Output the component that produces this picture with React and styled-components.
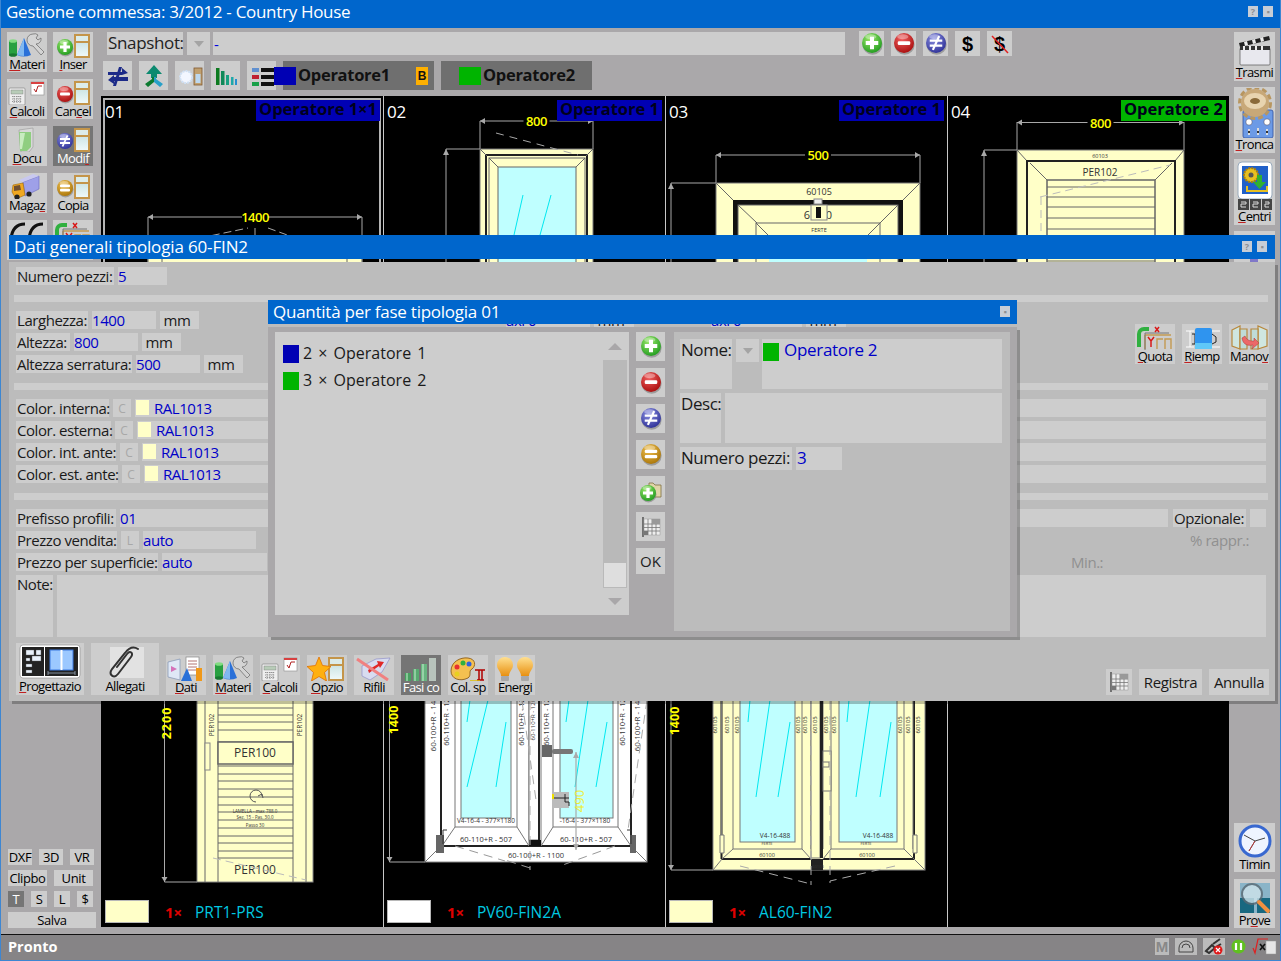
import React from 'react';
import styled, { createGlobalStyle } from 'styled-components';

const GlobalStyle = createGlobalStyle`
  html, body {
    margin: 0;
    padding: 0;
    background: #aaa8aa;
  }

  * {
    box-sizing: border-box;
  }
`;

const FONT = '"Open Sans", "Noto Sans", "Liberation Sans", sans-serif';
const SILVER = '#cdcdcd';
const CREAM = '#ffffc8';
const GLASS = '#bfffff';

const Root = styled.div`
  position: relative;
  display: flex;
  flex-direction: column;
  width: 1281px;
  height: 961px;
  overflow: hidden;
  background: #aaa8aa;
  color: #000;
  font-family: ${FONT};

  &::after {
    content: '';
    position: absolute;
    inset: 0;
    border: 1px solid #3d86d2;
    border-top: 0;
    pointer-events: none;
  }
`;

const TitleBar = styled.div`
  display: flex;
  align-items: center;
  justify-content: space-between;
  flex: none;
  height: ${({ $h }) => $h || 24}px;
  padding: ${({ $pad }) => $pad || '0 5px'};
  background: #0066cc;
  color: #fff;
  font-size: 17px;
  letter-spacing: ${({ $ls }) => $ls}px;
  white-space: nowrap;
`;

const TitleButtons = styled.div`
  display: flex;
  gap: 5px;
`;

const TitleButton = styled.span`
  display: flex;
  align-items: center;
  justify-content: center;
  width: 10px;
  height: 11px;
  background: #c6cdd6;
  color: #8b8f94;
  font-size: 9px;
  font-weight: 700;
  line-height: 1;
  letter-spacing: 0;
`;

const Middle = styled.div`
  display: flex;
  flex: none;
  height: 906px;
  padding: 4px 6px 6px 7px;
`;

const LeftColumn = styled.div`
  display: flex;
  flex: none;
  flex-direction: column;
  justify-content: space-between;
  width: 94px;
`;

const ToolGrid = styled.div`
  display: grid;
  grid-template-columns: 40px 40px;
  gap: 7px 6px;
`;

const SmallTools = styled.div`
  display: flex;
  flex-direction: column;
  gap: 5px;
  margin-left: 1px;
`;

const SmallRow = styled.div`
  display: flex;
  gap: 7px;
`;

const SmallButton = styled.button`
  display: flex;
  align-items: center;
  justify-content: center;
  width: ${({ $w }) => $w}px;
  height: 16px;
  padding: 0;
  border: 0;
  background: ${({ $dark }) => ($dark ? '#757575' : SILVER)};
  color: ${({ $dark }) => ($dark ? '#fff' : '#000')};
  font-family: ${FONT};
  font-size: 13px;
  letter-spacing: -0.4px;
`;

const Center = styled.div`
  display: flex;
  flex: none;
  flex-direction: column;
  gap: 6px;
  width: 1128px;
`;

const SnapshotRow = styled.div`
  display: flex;
  align-items: center;
  height: 23px;
  padding-left: 6px;
`;

const SnapshotLabel = styled.span`
  display: flex;
  align-items: center;
  width: 76px;
  height: 23px;
  padding: 0 0 2px 1px;
  background: ${SILVER};
  color: #222;
  font-size: 17px;
  letter-spacing: -0.35px;
`;

const DropDown = styled.span`
  display: flex;
  align-items: center;
  justify-content: center;
  width: 23px;
  height: 23px;
  margin: 0 ${({ $after }) => $after}px 0 ${({ $before }) => $before}px;
  background: ${SILVER};

  &::after {
    content: '';
    border-top: 6px solid #a4a4a4;
    border-right: 5px solid transparent;
    border-left: 5px solid transparent;
  }
`;

const SnapshotField = styled.span`
  display: flex;
  align-items: center;
  width: 632px;
  height: 23px;
  padding-left: 1px;
  background: ${SILVER};
  color: #0000e0;
  font-size: 15px;
`;

const RoundTools = styled.div`
  display: flex;
  gap: 7px;
  margin: -1px 0 -1px 14px;
`;

const IconButton = styled.button`
  display: flex;
  align-items: center;
  justify-content: center;
  flex: none;
  width: ${({ $s }) => $s}px;
  height: ${({ $h, $s }) => $h || $s}px;
  padding: 0;
  border: 0;
  background: ${SILVER};
  color: #222;
  font-family: ${FONT};
  font-size: 15px;

  svg {
    display: block;
  }
`;

const DollarMark = styled.span`
  position: relative;
  color: #000;
  font-family: "Liberation Sans", sans-serif;
  font-size: 20px;
  font-weight: 700;
  line-height: 1;

  svg {
    position: absolute;
    left: -3px;
    top: 0;
  }
`;

const SecondRow = styled.div`
  display: flex;
  align-items: center;
  height: 29px;
  padding-left: 2px;
`;

const SmallIconRow = styled.div`
  display: flex;
  gap: 7px;
`;

const OperatorTab = styled.div`
  position: relative;
  display: flex;
  align-items: center;
  flex: none;
  width: 151px;
  height: 29px;
  margin-left: ${({ $ml }) => $ml}px;
  padding: 0 0 2px ${({ $pl }) => $pl}px;
  background: #6f6f6f;
  color: #111;
  font-size: 16.5px;
  font-weight: 700;
  letter-spacing: -0.3px;
`;

const TabSwatch = styled.span`
  flex: none;
  width: 22px;
  height: 18px;
  margin: 2px 2px 0 0;
  background: ${({ $c }) => $c};
`;

const OverlapSwatch = styled.span`
  position: absolute;
  left: -9px;
  top: 6px;
  width: 22px;
  height: 18px;
  background: ${({ $c }) => $c};
`;

const TabBadge = styled.span`
  position: absolute;
  right: 6px;
  top: 6px;
  display: flex;
  align-items: center;
  justify-content: center;
  width: 12px;
  height: 18px;
  background: #ffb000;
  font-family: "Liberation Sans", sans-serif;
  font-size: 12px;
`;

const Canvas = styled.div`
  display: grid;
  grid-template-columns: repeat(4, 282px);
  grid-template-rows: 415px 416px;
  flex: none;
  height: 831px;
  background: #000;
`;

const DrawCell = styled.div`
  position: relative;
  overflow: hidden;
  background: #000;
  box-shadow: ${({ $selected, $first }) =>
    $selected
      ? 'inset 0 0 0 2px #000, inset 0 0 0 4px #b4b4b4'
      : $first
        ? 'none'
        : 'inset 1px 0 0 #c8c8c8'};

  svg {
    display: block;
    width: 100%;
    height: 100%;
  }
`;

const CellNumber = styled.span`
  position: absolute;
  left: 4px;
  top: 4px;
  color: #fff;
  font-size: 17px;
  letter-spacing: -0.3px;
`;

const Banner = styled.span`
  position: absolute;
  right: 3px;
  top: 4px;
  height: 21px;
  padding: 0 3px;
  background: ${({ $c }) => $c};
  color: #00001c;
  font-size: 16.5px;
  font-weight: 700;
  line-height: 18px;
  white-space: nowrap;
`;

const Caption = styled.div`
  position: absolute;
  left: 4px;
  bottom: 4px;
  display: flex;
  align-items: center;
  height: 23px;
`;

const CaptionSwatch = styled.span`
  width: 44px;
  height: 23px;
  margin-right: 16px;
  border: 1px solid #b8b8b8;
  background: ${({ $c }) => $c};
`;

const CaptionCount = styled.span`
  width: 30px;
  color: #e00000;
  font-size: 15px;
  font-weight: 700;
`;

const CaptionName = styled.span`
  color: #00c8e0;
  font-size: 15.5px;
`;

const RightColumn = styled.div`
  display: flex;
  flex: none;
  flex-direction: column;
  justify-content: space-between;
  width: 41px;
  margin-left: 5px;
`;

const ToolStack = styled.div`
  display: flex;
  flex-direction: column;
  gap: ${({ $gap }) => $gap || 7}px;
`;

const ToolButton = styled.button`
  display: flex;
  flex: none;
  flex-direction: column;
  align-items: center;
  justify-content: space-between;
  width: ${({ $w }) => $w || 40}px;
  height: ${({ $h }) => $h || 40}px;
  padding: 1px 0 0;
  border: 0;
  background: ${({ $dark }) => ($dark ? '#757575' : SILVER)};
  color: ${({ $dark }) => ($dark ? '#fff' : '#000')};
  font-family: ${FONT};

  svg {
    display: block;
    flex: none;
  }
`;

const ToolLabel = styled.span`
  display: block;
  height: 15px;
  font-size: 13px;
  line-height: 12px;
  letter-spacing: -0.65px;
  white-space: nowrap;
`;

const AccessKey = styled.span`
  text-decoration: underline;
  text-decoration-color: #c02020;
`;

const StatusBar = styled.div`
  display: flex;
  align-items: center;
  justify-content: space-between;
  flex: none;
  height: 27px;
  padding: 0 4px 3px 8px;
  border-top: 1px solid #111;
  background: #868486;
  color: #fff;
  font-size: 14.5px;
  font-weight: 700;
`;

const StatusIcons = styled.div`
  display: flex;
  align-items: center;
  gap: 6px;
`;

const StatusCell = styled.span`
  display: flex;
  align-items: center;
  justify-content: center;
  width: ${({ $w }) => $w}px;
  height: 17px;
  background: ${({ $plain }) => ($plain ? 'transparent' : '#bbb')};
  color: #888;
  font-family: "Liberation Sans", sans-serif;
  font-size: 15px;
`;

const Window = styled.section`
  position: absolute;
  left: ${({ $x }) => $x}px;
  top: ${({ $y }) => $y}px;
  display: flex;
  flex-direction: column;
  width: ${({ $w }) => $w}px;
`;

const WindowBody = styled.div`
  display: flex;
  flex-direction: ${({ $row }) => ($row ? 'row' : 'column')};
  gap: ${({ $row }) => ($row ? '7px' : '0')};
  height: ${({ $h }) => $h}px;
  margin-top: 3px;
  padding: ${({ $pad }) => $pad};
  background: ${({ $bg }) => $bg};
  box-shadow: 3px 3px 0 rgba(0, 0, 0, 0.25);
`;

const Row = styled.div`
  display: flex;
  flex: none;
  gap: 4px;
  height: ${({ $h }) => $h || 18}px;
`;

const Stack = styled.div`
  display: flex;
  flex: ${({ $grow }) => ($grow ? 1 : 'none')};
  flex-direction: column;
  gap: 4px;
  min-width: 0;
`;

const Block = styled.div`
  display: flex;
  flex: none;
`;

const SideTools = styled.div`
  display: flex;
  flex: none;
  gap: 7px;
  margin: 13px -3px 0 0;
`;

const Strip = styled.div`
  flex: none;
  height: 7px;
  margin: 10px -2px 9px;
  background: ${SILVER};
`;

const Label = styled.span`
  display: block;
  flex: none;
  width: ${({ $w }) => $w}px;
  height: ${({ $tall }) => ($tall ? '100%' : '18px')};
  margin-left: ${({ $ml }) => $ml || 0}px;
  padding-left: 1px;
  background: ${({ $bare }) => ($bare ? 'transparent' : SILVER)};
  color: ${({ $bare }) => ($bare ? '#909090' : '#1a1a1a')};
  font-size: 15px;
  line-height: 19px;
  letter-spacing: -0.45px;
  white-space: nowrap;
`;

const Field = styled.span`
  display: flex;
  align-items: flex-start;
  flex: ${({ $w }) => ($w ? 'none' : 1)};
  width: ${({ $w }) => ($w ? `${$w}px` : 'auto')};
  margin-left: ${({ $ml }) => $ml || 0}px;
  padding-left: 0;
  background: ${SILVER};
  color: ${({ $plain }) => ($plain ? '#1a1a1a' : '#0000c8')};
  font-size: 15px;
  line-height: 19px;
  letter-spacing: -0.45px;
  white-space: nowrap;
`;

const KeyField = styled.span`
  display: flex;
  align-items: center;
  justify-content: center;
  flex: none;
  width: 18px;
  background: ${SILVER};
  color: #a8a8a8;
  font-size: 12px;
`;

const ColorSwatch = styled.span`
  flex: none;
  width: 13px;
  height: 15px;
  margin: 1px 5px 0 1px;
  background: ${CREAM};
`;

const Toolbar = styled.div`
  display: flex;
  align-items: flex-end;
  flex: none;
  gap: 7px;
  margin: 6px -3px 0 0;
`;

const TextButton = styled.button`
  flex: none;
  width: ${({ $w }) => $w}px;
  height: 26px;
  padding: 0;
  border: 0;
  background: ${SILVER};
  color: #1a1a1a;
  font-family: ${FONT};
  font-size: 15px;
  letter-spacing: -0.4px;
`;

const Spacer = styled.span`
  flex: 1;
`;

const ListBox = styled.div`
  display: flex;
  flex: none;
  width: 354px;
  height: 283px;
  background: ${SILVER};
`;

const ListItems = styled.div`
  display: flex;
  flex: 1;
  flex-direction: column;
  gap: 9px;
  padding: 13px 0 0 8px;
`;

const ListItem = styled.div`
  display: flex;
  align-items: center;
  gap: 4px;
  height: 18px;
  color: #1a1a1a;
  font-size: 16px;
  line-height: 16px;
  word-spacing: 2px;
`;

const ListSwatch = styled.span`
  width: 16px;
  height: 18px;
  background: ${({ $c }) => $c};
`;

const ListText = styled.span`
  margin-top: -2px;
`;

const ScrollBar = styled.div`
  display: flex;
  flex: none;
  flex-direction: column;
  width: 24px;
  margin-right: 2px;
`;

const ScrollArrow = styled.span`
  display: flex;
  align-items: center;
  justify-content: center;
  height: ${({ $h }) => $h}px;

  &::after {
    content: '';
    border-right: 7px solid transparent;
    border-left: 7px solid transparent;
    ${({ $down }) => ($down ? 'border-top' : 'border-bottom')}: 7px solid #a9a7a9;
  }
`;

const ScrollTrack = styled.div`
  display: flex;
  flex: 1;
  align-items: flex-end;
  padding: 1px;
  background: #b9b9b9;
`;

const ScrollThumb = styled.span`
  width: 100%;
  height: 24px;
  background: #dedede;
`;

const DialogTools = styled.div`
  display: flex;
  flex: none;
  flex-direction: column;
  gap: 7px;
`;

const Panel = styled.div`
  display: flex;
  flex: none;
  flex-direction: column;
  gap: 4px;
  width: 336px;
  height: 299px;
  margin-left: 2px;
  padding: 7px 8px 0 6px;
  background: #bcbcbc;
`;

const PanelRow = styled.div`
  display: flex;
  gap: 4px;
  height: ${({ $h }) => $h}px;
`;

const PanelLabel = styled.span`
  flex: none;
  width: ${({ $w }) => $w}px;
  padding-left: 1px;
  background: ${SILVER};
  color: #1a1a1a;
  font-size: 17px;
  line-height: 22px;
  letter-spacing: -0.45px;
  white-space: nowrap;
`;

const PanelField = styled.span`
  display: flex;
  align-items: flex-start;
  flex: ${({ $w }) => ($w ? 'none' : 1)};
  width: ${({ $w }) => ($w ? `${$w}px` : 'auto')};
  padding: ${({ $swatch }) => ($swatch ? '4px 0 0 1px' : '0 0 0 1px')};
  background: ${SILVER};
  color: #0000c8;
  font-size: 17px;
  line-height: 22px;
  letter-spacing: -0.3px;
`;

const PanelSwatch = styled.span`
  flex: none;
  width: 16px;
  height: 18px;
  margin-right: 5px;
  background: #00b400;
`;

const PanelValue = styled.span`
  margin-top: -4px;
`;

const HiddenDefs = styled.svg`
  position: absolute;
  width: 0;
  height: 0;
`;

const Defs = () => (
  <HiddenDefs aria-hidden="true">
    <defs>
      {[
        ['green', '#9be86a', '#1e9a1e'],
        ['red', '#f06060', '#a80c0c'],
        ['blue', '#8a8ee0', '#2c2f96'],
        ['gold', '#f0c050', '#a87408'],
      ].map(([id, a, b]) => (
        <radialGradient key={id} id={`ball-${id}`} cx="40%" cy="30%" r="75%">
          <stop offset="0" stopColor={a} />
          <stop offset="1" stopColor={b} />
        </radialGradient>
      ))}
      <linearGradient id="bulb" x1="0" y1="0" x2="0" y2="1">
        <stop offset="0" stopColor="#ffe090" />
        <stop offset="1" stopColor="#e89010" />
      </linearGradient>
      <linearGradient id="glassy" x1="0" y1="0" x2="0" y2="1">
        <stop offset="0" stopColor="#cfe6e6" />
        <stop offset="1" stopColor="#eef8f8" />
      </linearGradient>
    </defs>
  </HiddenDefs>
);

const Ball = ({ cx, cy, r, color, sym }) => {
  const u = r / 8;
  return (
    <g transform={`translate(${cx} ${cy}) scale(${u})`}>
      <ellipse cx="0.5" cy="1.4" rx="8" ry="8" fill="#777" opacity="0.55" />
      <circle r="8" fill={`url(#ball-${color})`} />
      <ellipse cx="-1" cy="-5" rx="4.5" ry="2" fill="#fff" opacity="0.35" />
      {sym === 'plus' && <path d="M-1.6-5H1.6V-1.6H5V1.6H1.6V5H-1.6V1.6H-5V-1.6H-1.6Z" fill="#fff" />}
      {sym === 'minus' && <rect x="-5" y="-1.5" width="10" height="3" rx="1" fill="#fff" />}
      {sym === 'eq' && (
        <g fill="#fff">
          <rect x="-5" y="-3.4" width="10" height="2.6" rx="1" />
          <rect x="-5" y="0.8" width="10" height="2.6" rx="1" />
        </g>
      )}
      {sym === 'ne' && (
        <g fill="none" stroke="#fff" strokeWidth="1.8">
          <path d="M-5-2H5M-5 2H5M2.5-5.500L-2.500 5.500" />
        </g>
      )}
    </g>
  );
};

const Sash = () => (
  <g>
    <rect x="21" y="1" width="16" height="24" fill="#c4954a" />
    <rect x="23" y="3" width="12" height="5" fill="#dcecea" />
    <rect x="23" y="10" width="12" height="13" fill="url(#glassy)" />
  </g>
);

const Calculator = () => (
  <g>
    <rect x="2" y="8" width="16" height="17" rx="1" fill="#eee" stroke="#888" strokeWidth="0.7" />
    <rect x="4" y="10" width="12" height="4" fill="#b8ccb8" stroke="#777" strokeWidth="0.4" />
    <path d="M5 16.5h10M5 19h10M5 21.500h10M7 16v7M10 16v7M13 16v7" stroke="#8a8a8a" strokeWidth="0.9" strokeDasharray="1.200 .8" />
    <rect x="24" y="2" width="13" height="13" fill="#fff" stroke="#999" strokeWidth="0.7" />
    <rect x="24" y="2" width="13" height="2" fill="#d84040" />
    <path d="M27 9l2 3 2-6h4" fill="none" stroke="#b02020" strokeWidth="1" />
  </g>
);

const Materials = () => (
  <g>
    <rect x="2" y="8" width="8" height="14" fill="#28a040" />
    <ellipse cx="6" cy="8" rx="4" ry="1.800" fill="#80dc80" />
    <ellipse cx="6" cy="22" rx="4" ry="1.800" fill="#187830" />
    <path d="M17 5L24 22Q17 25 10 22Z" fill="#2a70d8" />
    <path d="M17 5L17 23Q13 23 10 22Z" fill="#80b8f0" />
    <path d="M26 1a5 5 0 0 1 5 1l-2 3 2 2 3-2a5 5 0 0 1-5 6l8 8-3 3-8-9a5 5 0 0 1 0-12z" fill="#d4d4d4" stroke="#666" strokeWidth="0.7" />
  </g>
);

const icons = {
  materi: <Materials />,
  inser: (
    <g>
      <Sash />
      <Ball cx={12} cy={14} r={8} color="green" sym="plus" />
    </g>
  ),
  calcoli: <Calculator />,
  cancel: (
    <g>
      <Sash />
      <Ball cx={12} cy={14} r={8} color="red" sym="minus" />
    </g>
  ),
  docu: (
    <g>
      <path d="M12 3L26 1V20L22 25H14Z" fill="#d8d8d8" stroke="#999" strokeWidth="0.6" />
      <path d="M12 5H24V20L20 24H13Z" fill="#8fce80" />
      <path d="M13 6H18L15 22H13Z" fill="#c8ecc0" />
    </g>
  ),
  modif: (
    <g>
      <Sash />
      <Ball cx={12} cy={14} r={8} color="blue" sym="ne" />
    </g>
  ),
  magaz: (
    <g>
      <path d="M16 8L32 2V15L18 22Z" fill="#9ea0e8" stroke="#6a6ac0" strokeWidth="0.6" />
      <path d="M16 8L32 2L26 0L12 6Z" fill="#c8c8f0" />
      <path d="M6 11L16 9L18 21L9 25L5 18Z" fill="#f0a820" stroke="#a06808" strokeWidth="0.6" />
      <path d="M7 12L13 11L14 16L7 17Z" fill="#705030" />
      <circle cx="10" cy="23" r="2.600" fill="#222" />
      <circle cx="22" cy="20" r="2.600" fill="#222" />
    </g>
  ),
  copia: (
    <g>
      <Sash />
      <Ball cx={12} cy={14} r={8} color="gold" sym="eq" />
    </g>
  ),
  ce: <path d="M18 3C10 3 5 8 4 18M36 3C28 3 23 8 22 18" fill="none" stroke="#111" strokeWidth="3" />,
  quota: (
    <g>
      <path d="M10 10V24M10 10H36M30 24V14h6v10M22 24V14h6" fill="none" stroke="#c49a52" strokeWidth="1.400" />
      <path d="M4 22V9a5 5 0 0 1 5-5h5" fill="none" stroke="#30b040" strokeWidth="4" />
      <path d="M10 8H34M10 8V26" fill="none" stroke="#777" strokeWidth="1" />
      <path d="M20 2l4 5M24 2l-4 5" stroke="#d81818" strokeWidth="1.500" />
      <path d="M13 12l3 4 3-4M16 16v6" fill="none" stroke="#d81818" strokeWidth="1.500" />
    </g>
  ),
  riemp: (
    <g>
      <path d="M4 6H12M4 22H12M8 6V22M30 6H38M30 22H38" stroke="#fff" strokeWidth="1" />
      <path d="M10 9h3v10h-3" fill="none" stroke="#222" strokeWidth="1" />
      <rect x="13" y="3" width="17" height="21" rx="2" fill="#2f94ef" />
      <rect x="13" y="18" width="17" height="6" fill="#60c8f8" />
      <path d="M30 9l4 3v5l-4 2" fill="none" stroke="#222" strokeWidth="1" />
    </g>
  ),
  manov: (
    <g>
      <path d="M3 5L11 1V24L3 21ZM38 5L29 1V24L38 21Z" fill="#cfe6e0" stroke="#b8883c" strokeWidth="1.200" />
      <path d="M11 4H18V24H11ZM22 4H29V24H22Z" fill="#bfdcd8" stroke="#b8883c" strokeWidth="1.200" />
      <path d="M13 13c1 7 6 8 11 7l-1 4 7-6-5-5v3c-3 0-7 0-9-5z" fill="#ec6868" stroke="#a83838" strokeWidth="0.500" />
    </g>
  ),
  dati: (
    <g>
      <path d="M2 6L14 3V24L2 21Z" fill="#dfe8f6" stroke="#8c9cb8" strokeWidth="0.800" />
      <path d="M5 10l6 3-6 3z" fill="#d040a0" opacity="0.700" />
      <rect x="20" y="1" width="13" height="18" fill="#fff" stroke="#888" strokeWidth="0.700" />
      <path d="M22 5h9M22 8h9M22 11h9M22 14h9" stroke="#a05050" strokeWidth="0.800" />
      <path d="M21 12L26 25H15Z" fill="#2a70d8" />
      <rect x="30" y="12" width="6" height="13" fill="#f09818" />
    </g>
  ),
  opzio: (
    <g>
      <Sash />
      <path d="M12 1L15.500 9.500L24 10.500L17.500 16.500L19.500 25L12 20.500L4.500 25L6.500 16.500L0 10.500L8.500 9.500Z" fill="#ffb010" stroke="#e07000" strokeWidth="0.800" />
    </g>
  ),
  rifili: (
    <g>
      <path d="M8 10L22 3L36 2L28 16L16 24L8 20Z" fill="#d8dcf0" stroke="#9090c8" strokeWidth="0.700" />
      <path d="M14 14L24 8L23 5L30 6L26 12L25 10L15 17Z" fill="#e02828" />
      <path d="M3 3L34 24" stroke="#f08080" strokeWidth="3" />
    </g>
  ),
  fasi: (
    <g>
      <rect x="4" y="17" width="6" height="8" fill="#48a060" />
      <rect x="12" y="13" width="6" height="12" fill="#58aa70" />
      <rect x="20" y="8" width="6" height="17" fill="#68b480" />
      <rect x="28" y="2" width="7" height="23" fill="#b8c4bc" />
      <path d="M6 17V25M14 13V25M22 8V25" stroke="#c8f0d0" strokeWidth="1" />
    </g>
  ),
  colsp: (
    <g>
      <path d="M3 15C3 6 12 1 20 2C28 3 28 10 24 13C20 15 24 19 20 22C12 26 3 23 3 15Z" fill="#f4c050" stroke="#805010" strokeWidth="0.800" />
      <circle cx="9" cy="11" r="2.500" fill="#e83030" />
      <circle cx="15" cy="7" r="2.500" fill="#30b040" />
      <circle cx="21" cy="8" r="2.500" fill="#3060e0" />
      <circle cx="9" cy="18" r="2.500" fill="#e8d020" />
      <path d="M27 14H37M29 24H36M31 14V24M34 14V24" fill="none" stroke="#b00000" strokeWidth="1.500" />
      <path d="M22 25H32" stroke="#e0c000" strokeWidth="1.500" />
    </g>
  ),
  energi: (
    <g>
      {[10, 30].map((x) => (
        <g key={x}>
          <path d={`M${x - 8} 9a8 8 0 0 1 16 0c0 5-4 6-4 11h-8c0-5-4-6-4-11z`} fill="url(#bulb)" />
          <rect x={x - 4} y="20" width="8" height="5" rx="1" fill="#a8a8a8" />
        </g>
      ))}
    </g>
  ),
  trasmi: (
    <g>
      <path d="M4 10L34 3L35 7L5 14Z" fill="#222" />
      <path d="M9 9l3-1 1 4-3 1zM17 7l3-1 1 4-3 1zM25 5l3-1 1 4-3 1z" fill="#eee" />
      <rect x="5" y="15" width="30" height="17" rx="1" fill="#e8e8ee" stroke="#666" strokeWidth="0.800" />
      <rect x="5" y="13" width="30" height="4" fill="#333" />
      <path d="M9 13v4M15 13v4M21 13v4M27 13v4" stroke="#eee" strokeWidth="2" />
    </g>
  ),
  tronca: (
    <g>
      <rect x="8" y="22" width="30" height="28" rx="2" fill="#6c9ae6" stroke="#3050a0" strokeWidth="0.800" />
      <circle cx="20" cy="15" r="14" fill="#c8a878" />
      <circle cx="20" cy="15" r="15.500" fill="none" stroke="#b89660" strokeWidth="3" strokeDasharray="5 3" />
      <ellipse cx="20" cy="13" rx="11" ry="8" fill="#e8d4b0" />
      <ellipse cx="20" cy="13" rx="5" ry="3" fill="#8a6a3a" />
      <circle cx="14" cy="34" r="3.200" fill="#fff" stroke="#335" strokeWidth="0.500" />
      <circle cx="32" cy="34" r="3.200" fill="#fff" stroke="#335" strokeWidth="0.500" />
      <path d="M14 41v6M23 40v7M32 41v6" stroke="#ddd" strokeWidth="2" />
      <path d="M14 43v2M23 43v2M32 43v2" stroke="#333" strokeWidth="2" />
    </g>
  ),
  centri: (
    <g>
      <rect x="3" y="2" width="34" height="37" rx="4" fill="#fff" stroke="#9ab" strokeWidth="1" />
      <rect x="7" y="6" width="26" height="28" fill="#2060c8" />
      <circle cx="16" cy="15" r="7" fill="#e8c020" stroke="#a88010" strokeWidth="2" strokeDasharray="2 1" />
      <circle cx="16" cy="15" r="2.500" fill="#555" />
      <path d="M22 15h5v7h4l-6.500 7-6.500-7h4z" fill="#30b030" />
      <path d="M12 26v5h20v-5" fill="none" stroke="#e8c020" strokeWidth="2" />
      <rect x="3" y="39" width="11" height="11" fill="#444" />
      <rect x="15" y="39" width="11" height="11" fill="#444" />
      <rect x="27" y="39" width="10" height="11" fill="#444" />
      <path d="M6 42h5v2h-5v3h5M18 42h5v2h-5v3h5M30 42h4v2h-4v3h4" fill="none" stroke="#ddd" strokeWidth="1" />
    </g>
  ),
  timin: (
    <g>
      <circle cx="20" cy="17" r="15" fill="#eef4ff" stroke="#3868d0" strokeWidth="3" />
      <path d="M20 17L9 11M20 17L30 14M20 17L14 27" stroke="#444" strokeWidth="1" />
      <path d="M20 17L14 27" stroke="#d03030" strokeWidth="0.800" />
    </g>
  ),
  prove: (
    <g>
      <rect x="5" y="3" width="30" height="30" fill="#8ab4c8" />
      <rect x="5" y="18" width="14" height="15" fill="#186880" />
      <rect x="22" y="18" width="13" height="15" fill="#186880" />
      <circle cx="17" cy="14" r="10" fill="#cfe4ec" opacity="0.800" stroke="#5a6a74" strokeWidth="2" />
      <path d="M24 22l9 9" stroke="#f09040" strokeWidth="4" strokeLinecap="round" />
    </g>
  ),
  spare: <rect x="15" y="24" width="8" height="6" fill="#8078c8" />,
  progettazione: (
    <g>
      <rect x="1" y="1" width="60" height="33" rx="3" fill="#fff" stroke="#888" strokeWidth="0.600" />
      <rect x="3" y="3" width="22" height="29" fill="#222" />
      <rect x="26" y="3" width="33" height="29" fill="#222" />
      <path d="M7 6h8v5H7zM17 6h5v5h-5zM7 14h4v3H7zM13 12h9v5H13zM7 20h6v3H7zM7 26h6v3H7z" fill="#e8f0fa" stroke="#555" strokeWidth="0.400" />
      <rect x="31" y="6" width="23" height="20" fill="#9cc8ff" stroke="#3a78e0" strokeWidth="1" />
      <path d="M42.500 6V26" stroke="#fff" strokeWidth="2" />
      <path d="M29 29H56M29 27v4M56 27v4" stroke="#9ab" strokeWidth="0.800" />
    </g>
  ),
  allegati: (
    <g>
      <rect x="16" y="3" width="34" height="31" fill="#e2e2e2" />
      <path d="M44 5C38 1 34 5 31 9L18 25C14 31 20 35 24 30L37 13C40 9 36 6 33 10L23 23" fill="none" stroke="#333" strokeWidth="2" strokeLinecap="round" />
    </g>
  ),
};

const Glyph = ({ name, w = 40, h = 26 }) => (
  <svg width={w} height={h} viewBox={`0 0 ${w} ${h}`}>
    {icons[name]}
  </svg>
);

const Tool = ({ label, name, dark, w, h, ih = 25, iw = 40, keyAt }) => {
  const text =
    keyAt === undefined ? (
      label
    ) : (
      <>
        {label.slice(0, keyAt)}
        <AccessKey>{label[keyAt]}</AccessKey>
        {label.slice(keyAt + 1)}
      </>
    );

  return (
    <ToolButton $dark={dark} $w={w} $h={h}>
      <Glyph name={name} w={iw} h={ih} />
      <ToolLabel>{text}</ToolLabel>
    </ToolButton>
  );
};

const RoundGlyph = ({ s = 24, color, sym }) => (
  <svg width={s} height={s} viewBox="0 0 24 24">
    <Ball cx={12} cy={11} r={10} color={color} sym={sym} />
  </svg>
);

const TableGlyph = () => (
  <svg width="22" height="22" viewBox="0 0 22 22">
    <path d="M3 1V21" stroke="#333" strokeWidth="1.200" />
    <rect x="4" y="3" width="16" height="16" fill="#eee" stroke="#999" strokeWidth="0.500" />
    <path d="M4 8H20M4 11.500H20M4 15H20M8 3V19M12 3V19M16 3V19" stroke="#777" strokeWidth="0.800" />
    <rect x="4" y="15" width="4" height="4" fill="#777" />
    <rect x="12" y="3" width="8" height="5" fill="#999" />
  </svg>
);

const SmallIcon = ({ kind }) => (
  <svg width="26" height="26" viewBox="0 0 26 26">
    {kind === 'swap' && (
      <g fill="#1c2a88">
        <path d="M3 9H17V5L23 10L17 12H3Z" />
        <path d="M23 14H9V12L3 17L9 21V18H23Z" />
        <path d="M14 4L17 4L11 23L8 23Z" />
      </g>
    )}
    {kind === 'merge' && (
      <g>
        <path d="M13 2L21 11H16V15H10V11H5Z" fill="#0c8a70" />
        <path d="M11 14H13V19L7 24L4 21L11 16Z" fill="#0c7a30" />
        <path d="M13 14H15V16L22 21L19 24L13 19Z" fill="#28a0c8" />
      </g>
    )}
    {kind === 'snow' && (
      <g>
        <circle cx="9" cy="14" r="6" fill="#f2f6ff" stroke="#cfe0f4" strokeDasharray="2 1" strokeWidth="2" />
        <rect x="17" y="5" width="8" height="17" fill="#c0a070" stroke="#805830" strokeWidth="0.800" />
        <rect x="18.500" y="11" width="5" height="9" fill="#bcd8f0" />
      </g>
    )}
    {kind === 'bars' && (
      <g>
        <rect x="3" y="5" width="3.500" height="17" fill="#0c7a20" />
        <rect x="8" y="8" width="3.500" height="14" fill="#108858" />
        <rect x="13" y="12" width="3" height="10" fill="#18a080" />
        <rect x="18" y="14" width="2.500" height="8" fill="#20a8a8" />
        <rect x="22" y="16" width="2" height="6" fill="#2890d0" />
      </g>
    )}
    {kind === 'list' && (
      <g>
        <rect x="3" y="5" width="7" height="4" fill="#6090d0" />
        <rect x="3" y="12" width="7" height="4" fill="#c02030" />
        <rect x="3" y="19" width="7" height="4" fill="#18a048" />
        <rect x="12" y="5" width="13" height="4" fill="#111" />
        <rect x="12" y="12" width="13" height="4" fill="#111" />
        <rect x="12" y="19" width="13" height="4" fill="#111" />
      </g>
    )}
  </svg>
);

const GRAY = '#a8a8a8';

const DimH = ({ x1, x2, y, text }) => {
  const mid = (x1 + x2) / 2;
  return (
    <g>
      <path d={`M${x1} ${y}H${x2}`} stroke={GRAY} />
      <path d={`M${x1} ${y}l5-3v6zM${x2} ${y}l-5-3v6z`} fill={GRAY} />
      <rect x={mid - 13} y={y - 7} width="26" height="14" fill="#000" />
      <text x={mid} y={y + 5} textAnchor="middle" fill="#ffff00" fontSize="13" fontWeight="600" fontFamily={FONT} letterSpacing="-0.5">
        {text}
      </text>
    </g>
  );
};

const Tiny = ({ x, y, size = 7, rotate, children, fill = '#333' }) => (
  <text
    x={rotate ? 0 : x}
    y={rotate ? 0 : y}
    transform={rotate ? `translate(${x} ${y}) rotate(-90)` : undefined}
    textAnchor="middle"
    fontSize={size}
    fill={fill}
    fontFamily={FONT}
  >
    {children}
  </text>
);

const LINE = '#666';

const Drawing = ({ x, y, h, children }) => (
  <svg viewBox={`${x} ${y} 282 ${h}`} preserveAspectRatio="none">
    {children}
  </svg>
);

const CellOne = () => (
  <Drawing x={101} y={96} h={415}>
    <DimH x1={148} x2={362} y={217} text="1400" />
    <path d="M148 217V262M362 217V262" stroke={GRAY} />
    <path d="M200 238L248 228M268 228L290 236M255 228V238" stroke={GRAY} strokeDasharray="8 4" />
    <rect x="148" y="258" width="214" height="200" fill={CREAM} stroke={LINE} />
    <path d="M162 258V458M347 258V458" stroke={LINE} />
  </Drawing>
);

const CellTwo = () => (
  <Drawing x={383} y={96} h={415}>
    <DimH x1={480} x2={593} y={121} text="800" />
    <path d="M480 121V149M593 121V149" stroke={GRAY} />
    <path d="M446 400V149H480" fill="none" stroke={GRAY} />
    <path d="M446 149l-3 6h6z" fill={GRAY} />
    <rect x="480" y="149" width="113" height="300" fill={CREAM} stroke="#777" />
    <path d="M486 300V155H587V300" fill="none" stroke="#222" strokeWidth="2" />
    <rect x="489" y="158" width="96" height="250" fill={CREAM} stroke={LINE} />
    <rect x="498" y="167" width="78" height="240" fill={GLASS} stroke={LINE} />
    <path d="M480 149L487 156M593 149L586 156M489 158L498 167M585 158L576 167" stroke={LINE} />
    <path d="M496 133L578 155" stroke={GRAY} strokeDasharray="8 6" />
    <path d="M514 235L523 195M540 235L551 195" stroke="#00e8f0" />
  </Drawing>
);

const CellThree = () => (
  <Drawing x={665} y={96} h={415}>
    <DimH x1={716} x2={920} y={155} text="500" />
    <path d="M716 155V183M920 155V183" stroke={GRAY} />
    <path d="M671 400V183H716" fill="none" stroke={GRAY} />
    <path d="M671 183l-3 6h6z" fill={GRAY} />
    <rect x="716" y="183" width="204" height="200" fill={CREAM} stroke="#777" />
    <path d="M716 183L733 200M920 183L903 200" stroke={LINE} />
    <rect x="733" y="200" width="170" height="200" fill="#111" />
    <rect x="738" y="205" width="160" height="200" fill={CREAM} stroke={LINE} />
    <path d="M738 205L757 223M898 205L880 223" stroke={LINE} />
    <rect x="756" y="223" width="124" height="200" fill={CREAM} stroke={LINE} />
    <path d="M756 223L769 236M880 223L867 236" stroke={LINE} />
    <rect x="769" y="258" width="98" height="120" fill={GLASS} />
    <Tiny x={819} y={195} size={9}>60105</Tiny>
    <Tiny x={807} y={219} size={11}>6</Tiny>
    <Tiny x={829} y={219} size={11}>0</Tiny>
    <Tiny x={819} y={232} size={5.500}>FERTE</Tiny>
    <rect x="811" y="205" width="16" height="15" fill={CREAM} stroke="#888" />
    <rect x="816" y="207" width="5" height="11" fill="#111" />
    <rect x="814" y="199" width="8" height="5" fill="#eee" stroke="#888" />
  </Drawing>
);

const CellFour = () => (
  <Drawing x={947} y={96} h={415}>
    <DimH x1={1017} x2={1184} y={122.500} text="800" />
    <path d="M1017 122V150M1184 122V150" stroke={GRAY} />
    <path d="M984 400V150H1017" fill="none" stroke={GRAY} />
    <path d="M984 150l-3 6h6z" fill={GRAY} />
    <rect x="1017" y="150" width="167" height="200" fill={CREAM} stroke="#777" />
    <path d="M1017 150L1027 161M1184 150L1175 161" stroke={LINE} />
    <rect x="1027" y="161" width="148" height="200" fill={CREAM} stroke="#222" strokeWidth="2" />
    <path d="M1030 163L1047 180M1172 163L1155 180" stroke={LINE} />
    <rect x="1047" y="180" width="108" height="200" fill={CREAM} stroke={LINE} strokeWidth="1.500" />
    <path d="M1047 187H1155M1047 197H1155M1047 207H1155M1047 218H1155M1047 229H1155M1047 240H1155M1047 251H1155M1047 261H1155" stroke={LINE} />
    <Tiny x={1100} y={158} size={5.500}>60103</Tiny>
    <Tiny x={1100} y={176} size={10}>PER102</Tiny>
    <path d="M1040 197L1170 165M1041 197V235" stroke="#bbb" strokeDasharray="8 5" fill="none" />
  </Drawing>
);

const SLATS = [766, 774, 781, 789, 797, 805, 812, 820, 828, 836, 843, 851, 858];

const Door = () => (
  <Drawing x={101} y={511} h={416}>
    <path d="M164.500 701V882H197" fill="none" stroke="#aaa" />
    <path d="M164.500 882l-3-5h6z" fill="#aaa" />
    <g transform="translate(171 723) rotate(-90)">
      <text textAnchor="middle" fill="#ffff00" fontSize="12.500" fontWeight="700" fontFamily={FONT} letterSpacing="1">
        2200
      </text>
    </g>
    <rect x="197" y="640" width="116" height="242" fill={CREAM} stroke="#888" />
    <path d="M205 640V882M218 640V882M293 640V882M306 640V882" stroke={LINE} />
    <path d="M218 708H293M218 715H293M218 722H293M218 730H293M218 742H293" stroke={LINE} />
    <rect x="218" y="742" width="75" height="22" fill={CREAM} stroke={LINE} strokeWidth="1.500" />
    <path d={SLATS.map((y) => `M218 ${y}H293`).join('')} stroke={LINE} />
    <rect x="205" y="743" width="5" height="27" fill={CREAM} stroke="#888" />
    <Tiny x={255} y={757} size={12}>PER100</Tiny>
    <Tiny x={255} y={874} size={12}>PER100</Tiny>
    <Tiny x={214} y={725} size={6.500} rotate>PER102</Tiny>
    <Tiny x={302} y={725} size={6.500} rotate>PER102</Tiny>
    <Tiny x={255} y={813} size={4.500}>LAMELLA - max 788.0</Tiny>
    <Tiny x={255} y={819} size={4.500}>Sez. 15 - Pas. 30.0</Tiny>
    <Tiny x={255} y={827} size={4.500}>Passo 30</Tiny>
    <path d="M262 796a6 6 0 1 0-6 6M258 796l4-2 1 4" fill="none" stroke="#555" />
    <path d="M213 858L306 880" stroke="#bbb" strokeDasharray="8 5" />
  </Drawing>
);

const DoubleWhite = () => (
  <Drawing x={383} y={511} h={416}>
    <path d="M389.500 701V862H425" fill="none" stroke="#aaa" />
    <path d="M389.500 862l-3-5h6z" fill="#aaa" />
    <g transform="translate(398 720) rotate(-90)">
      <text textAnchor="middle" fill="#ffff00" fontSize="12.500" fontWeight="700" fontFamily={FONT}>1400</text>
    </g>
    <rect x="425" y="640" width="222" height="222" fill="#fff" stroke="#888" />
    <path d="M441 640V846H631V640" fill="none" stroke="#222" strokeWidth="2" />
    <path d="M455 640V827L442 846M529 640V846M539 640V846M541 640V846M553 640V827M618 640V827L631 846M517 640V827L529 846M553 827L541 846" fill="none" stroke="#777" />
    <path d="M455 827H517M553 827H618M425 862L441 846M647 862L631 846" stroke="#777" />
    <rect x="461" y="640" width="50" height="178" fill={GLASS} stroke="#777" />
    <rect x="560" y="640" width="53" height="178" fill={GLASS} stroke="#777" />
    <rect x="529" y="640" width="10" height="200" fill="#fff" stroke="#777" />
    <rect x="529" y="840" width="12" height="6" fill="#111" />
    <path d="M539 640V840" stroke="#222" strokeWidth="2" />
    <path d="M467 787L488 700M496 787L506 722M467 722L470 700M575 787L588 700M596 787L607 722M566 722L569 700" stroke="#00e8f0" />
    <Tiny x={436} y={726} rotate size={8}>60-100+R - 14</Tiny>
    <Tiny x={449} y={722} rotate size={7.500}>60-110+R - 12</Tiny>
    <Tiny x={524} y={722} rotate size={7.500}>60-110+R - 12</Tiny>
    <Tiny x={535} y={718} rotate size={6}>60-110+R - 1200</Tiny>
    <Tiny x={549} y={722} rotate size={7.500}>60-110+R - 12</Tiny>
    <Tiny x={625} y={722} rotate size={7.500}>60-110+R - 12</Tiny>
    <Tiny x={640} y={726} rotate size={8}>60-100+R - 14</Tiny>
    <Tiny x={486} y={823} size={6.500}>V4-16-4 - 377×1180</Tiny>
    <Tiny x={585} y={823} size={6.500}>-16-4 - 377×1180</Tiny>
    <Tiny x={486} y={842} size={7.500}>60-110+R - 507</Tiny>
    <Tiny x={586} y={842} size={7.500}>60-110+R - 507</Tiny>
    <Tiny x={536} y={858} size={7.500}>60-100+R - 1100</Tiny>
    <rect x="542" y="745" width="10" height="12" fill="#666" />
    <rect x="552" y="749" width="21" height="5" rx="2" fill="#777" />
    <rect x="553" y="792" width="16" height="16" fill="#bbb" />
    <path d="M553 798H569M565 794V802L569 802V806" fill="none" stroke="#222" />
    <path d="M553 794V799" stroke="#f0e000" strokeWidth="2" />
    <path d="M576 752V850" stroke="#aaa" strokeWidth="1.200" />
    <path d="M576 752l-3 6h6zM576 850l-3-6h6z" fill="#aaa" />
    <g transform="translate(584 801) rotate(-90)">
      <text textAnchor="middle" fill="#eeee30" fontSize="13" fontFamily={FONT}>490</text>
    </g>
    <path d="M436 835h8v18h-8zM630 835h6v18h-6z" fill="#666" />
    <path d="M447 830h-4v14M627 830h4v14" fill="none" stroke="#333" />
    <path d="M455 846L505 861M530 868L505 860M615 846L560 866" stroke="#999" strokeDasharray="9 6" />
    <path d="M530 701V870M522 701L536 800M647 700L628 830" stroke="#aaa" strokeDasharray="9 6" />
  </Drawing>
);

const DoubleCream = () => {
  const v = [721.500, 733, 802, 811, 823, 831, 904, 913];
  return (
    <Drawing x={665} y={511} h={416}>
      <path d="M671 701V870H713" fill="none" stroke="#aaa" />
      <path d="M671 870l-3-5h6z" fill="#aaa" />
      <g transform="translate(679 721) rotate(-90)">
        <text textAnchor="middle" fill="#ffff00" fontSize="12.500" fontWeight="700" fontFamily={FONT}>1400</text>
      </g>
      <rect x="713" y="640" width="212" height="230" fill={CREAM} stroke="#888" />
      <path d="M721.500 640V859M914 640V859M721 859H811M823 859H914" stroke="#222" strokeWidth="2" fill="none" />
      <path d="M713 870L722 859M925 870L914 859" stroke="#777" />
      <path d={v.map((x) => `M${x} 640V849`).join('')} stroke="#777" />
      <path d="M733 849H802M831 849H904M722 859L733 849M811 859L802 849M823 859L831 849M914 859L904 849" stroke="#777" />
      <rect x="811" y="640" width="9" height="218" fill={CREAM} stroke="#777" />
      <rect x="820" y="640" width="3" height="218" fill="#222" />
      <rect x="811" y="859" width="12" height="11" fill="#222" />
      <rect x="740" y="640" width="55" height="202" fill={GLASS} stroke="#777" />
      <rect x="839" y="640" width="58" height="202" fill={GLASS} stroke="#777" />
      <path d="M756 797L770 700M778 797L790 722M748 722L750 700M856 797L870 700M880 797L891 722M847 722L849 700" stroke="#00e8f0" />
      {[715, 727, 737, 798, 805, 815, 826, 834, 900, 908, 918].map((x) => (
        <Tiny key={x} x={x + 2} y={725} rotate size={6} fill="#222">60105</Tiny>
      ))}
      <rect x="823" y="751" width="8" height="40" fill={CREAM} stroke="#777" />
      <rect x="823" y="762" width="6" height="5" fill={CREAM} stroke="#777" />
      <Tiny x={775} y={838} size={6.500}>V4-16-488</Tiny>
      <Tiny x={878} y={838} size={6.500}>V4-16-488</Tiny>
      <Tiny x={767} y={844.500} size={4}>FERTE</Tiny>
      <Tiny x={866} y={844.500} size={4}>FERTE</Tiny>
      <Tiny x={767} y={857} size={5.500}>60100</Tiny>
      <Tiny x={867} y={857} size={5.500}>60100</Tiny>
      <Tiny x={818} y={868} size={4}>60100</Tiny>
      <path d="M720 835h4v18h-4zM913 835h4v18h-4z" fill={CREAM} stroke="#777" />
      <path d="M740 866L811 884M895 866L830 881M811 701V885M830 701V883" stroke="#aaa" strokeDasharray="9 6" />
    </Drawing>
  );
};

const OPERATOR_1 = '#0000b4';
const OPERATOR_2 = '#00b400';

const LEFT_TOOLS = [
  ['Materi', 'materi', 0],
  ['Inser', 'inser', 0],
  ['Calcoli', 'calcoli', 0],
  ['Cancel', 'cancel', 3],
  ['Docu', 'docu', 0],
  ['Modif', 'modif', 4, true],
  ['Magaz', 'magaz', 4],
  ['Copia', 'copia'],
  ['', 'ce'],
  ['', 'quota'],
];

const ColorRow = ({ label, w }) => (
  <Row>
    <Label $w={w}>{label}</Label>
    <KeyField>C</KeyField>
    <Field>
      <ColorSwatch />
      RAL1013
    </Field>
  </Row>
);

const App = () => (
  <Root>
    <GlobalStyle />
    <Defs />
    <TitleBar $h={28} $ls={-0.3} $pad="0 8px 6px 6px">
      Gestione commessa: 3/2012 - Country House
      <TitleButtons>
        <TitleButton>?</TitleButton>
        <TitleButton>▪</TitleButton>
      </TitleButtons>
    </TitleBar>

    <Middle>
      <LeftColumn>
        <ToolGrid>
          {LEFT_TOOLS.map(([label, name, keyAt, dark]) => (
            <Tool key={name} label={label} name={name} keyAt={keyAt} dark={dark} />
          ))}
        </ToolGrid>
        <SmallTools>
          <SmallRow>
            <SmallButton $w={24}>DXF</SmallButton>
            <SmallButton $w={24}>3D</SmallButton>
            <SmallButton $w={24}>VR</SmallButton>
          </SmallRow>
          <SmallRow>
            <SmallButton $w={39}>Clipbo</SmallButton>
            <SmallButton $w={39}>Unit</SmallButton>
          </SmallRow>
          <SmallRow>
            <SmallButton $w={16} $dark>T</SmallButton>
            <SmallButton $w={16}>S</SmallButton>
            <SmallButton $w={16}>L</SmallButton>
            <SmallButton $w={16}>$</SmallButton>
          </SmallRow>
          <SmallRow>
            <SmallButton $w={88}>Salva</SmallButton>
          </SmallRow>
        </SmallTools>
      </LeftColumn>

      <Center>
        <SnapshotRow>
          <SnapshotLabel>Snapshot:</SnapshotLabel>
          <DropDown $before={4} $after={3} />
          <SnapshotField>-</SnapshotField>
          <RoundTools>
            <IconButton $s={25}><RoundGlyph color="green" sym="plus" /></IconButton>
            <IconButton $s={25}><RoundGlyph color="red" sym="minus" /></IconButton>
            <IconButton $s={25}><RoundGlyph color="blue" sym="ne" /></IconButton>
            <IconButton $s={25}><DollarMark>$</DollarMark></IconButton>
            <IconButton $s={25}>
              <DollarMark>
                $
                <svg width="18" height="20" viewBox="0 0 18 20">
                  <path d="M1 2L17 19" stroke="#e02020" strokeWidth="1.500" />
                </svg>
              </DollarMark>
            </IconButton>
          </RoundTools>
        </SnapshotRow>

        <SecondRow>
          <SmallIconRow>
            <IconButton $s={29}><SmallIcon kind="swap" /></IconButton>
            <IconButton $s={29}><SmallIcon kind="merge" /></IconButton>
            <IconButton $s={29}><SmallIcon kind="snow" /></IconButton>
            <IconButton $s={29}><SmallIcon kind="bars" /></IconButton>
            <IconButton $s={29}><SmallIcon kind="list" /></IconButton>
          </SmallIconRow>
          <OperatorTab $ml={7} $pl={15}>
            <OverlapSwatch $c={OPERATOR_1} />
            Operatore1
            <TabBadge>B</TabBadge>
          </OperatorTab>
          <OperatorTab $ml={7} $pl={18}>
            <TabSwatch $c={OPERATOR_2} />
            Operatore2
          </OperatorTab>
        </SecondRow>

        <Canvas>
          <DrawCell $selected>
            <CellOne />
            <CellNumber>01</CellNumber>
            <Banner $c={OPERATOR_1}>Operatore 1×1</Banner>
          </DrawCell>
          <DrawCell>
            <CellTwo />
            <CellNumber>02</CellNumber>
            <Banner $c={OPERATOR_1}>Operatore 1</Banner>
          </DrawCell>
          <DrawCell>
            <CellThree />
            <CellNumber>03</CellNumber>
            <Banner $c={OPERATOR_1}>Operatore 1</Banner>
          </DrawCell>
          <DrawCell>
            <CellFour />
            <CellNumber>04</CellNumber>
            <Banner $c={OPERATOR_2}>Operatore 2</Banner>
          </DrawCell>
          <DrawCell $first>
            <Door />
            <Caption>
              <CaptionSwatch $c={CREAM} />
              <CaptionCount>1×</CaptionCount>
              <CaptionName>PRT1-PRS</CaptionName>
            </Caption>
          </DrawCell>
          <DrawCell>
            <DoubleWhite />
            <Caption>
              <CaptionSwatch $c="#fff" />
              <CaptionCount>1×</CaptionCount>
              <CaptionName>PV60-FIN2A</CaptionName>
            </Caption>
          </DrawCell>
          <DrawCell>
            <DoubleCream />
            <Caption>
              <CaptionSwatch $c={CREAM} />
              <CaptionCount>1×</CaptionCount>
              <CaptionName>AL60-FIN2</CaptionName>
            </Caption>
          </DrawCell>
          <DrawCell />
        </Canvas>
      </Center>

      <RightColumn>
        <ToolStack $gap={6}>
          <Tool label="Trasmi" name="trasmi" keyAt={0} w={41} h={49} iw={40} ih={33} />
          <Tool label="Tronca" name="tronca" keyAt={0} w={41} h={66} iw={40} ih={50} />
          <Tool label="Centri" name="centri" keyAt={0} w={41} h={66} iw={40} ih={50} />
          <Tool label="" name="spare" w={41} h={49} iw={40} ih={33} />
        </ToolStack>
        <ToolStack>
          <Tool label="Timin" name="timin" w={41} h={49} iw={40} ih={34} />
          <Tool label="Prove" name="prove" keyAt={2} w={41} h={49} iw={40} ih={34} />
        </ToolStack>
      </RightColumn>
    </Middle>

    <StatusBar>
      Pronto
      <StatusIcons>
        <StatusCell $w={14}>M</StatusCell>
        <StatusCell $w={22}>
          <svg width="18" height="15" viewBox="0 0 18 15">
            <path d="M2 13V9a7 7 0 0 1 14 0v4zM5 9a4 4 0 0 1 8 0" fill="none" stroke="#444" />
          </svg>
        </StatusCell>
        <StatusCell $w={22}>
          <svg width="22" height="17" viewBox="0 0 22 17">
            <path d="M3 13L9 7l3 3-6 5zM10 6l7-5M13 9l5-3" stroke="#333" strokeWidth="2" fill="none" />
            <circle cx="15" cy="12" r="4.500" fill="#e01818" />
            <path d="M13 10l4 4M17 10l-4 4" stroke="#fff" strokeWidth="1.200" />
          </svg>
        </StatusCell>
        <StatusCell $w={15} $plain>
          <svg width="15" height="17" viewBox="0 0 15 17">
            <circle cx="7.500" cy="8.500" r="7" fill="#60c020" />
            <path d="M5 5v7M10 5v7" stroke="#fff" strokeWidth="2.200" />
          </svg>
        </StatusCell>
        <StatusCell $w={25} $plain>
          <svg width="25" height="17" viewBox="0 0 25 17">
            <rect x="14" y="3" width="10" height="13" fill="#e6e6e6" stroke="#999" strokeWidth="0.500" />
            <path d="M1 10l2 5 3-14h10" fill="none" stroke="#e02020" strokeWidth="1.200" />
            <path d="M8 6l5 6M13 6l-5 6" stroke="#111" strokeWidth="1.600" />
          </svg>
        </StatusCell>
      </StatusIcons>
    </StatusBar>

    <Window $x={9} $y={235} $w={1266}>
      <TitleBar $ls={-0.15} $pad="0 8px 2px 5px">
        Dati generali tipologia 60-FIN2
        <TitleButtons>
          <TitleButton>?</TitleButton>
          <TitleButton>▪</TitleButton>
        </TitleButtons>
      </TitleBar>
      <WindowBody $h={439} $bg="#bcbcbc" $pad="5px 9px 0 7px">
        <Row>
          <Label $w={98}>Numero pezzi:</Label>
          <Field $w={49}>5</Field>
        </Row>
        <Strip />
        <Block>
          <Stack $grow>
            <Row>
              <Label $w={72}>Larghezza:</Label>
              <Field $w={64}>1400</Field>
              <Field $w={39} $plain>&nbsp;mm</Field>
              <Field $w={84} $ml={303}>axi 0</Field>
              <Field $w={40} $plain>&nbsp;mm</Field>
              <Field $w={91} $ml={73}>axi 0</Field>
              <Field $w={40} $plain>&nbsp;mm</Field>
            </Row>
            <Row>
              <Label $w={54}>Altezza:</Label>
              <Field $w={64}>800</Field>
              <Field $w={39} $plain>&nbsp;mm</Field>
            </Row>
            <Row>
              <Label $w={116}>Altezza serratura:</Label>
              <Field $w={64}>500</Field>
              <Field $w={39} $plain>&nbsp;mm</Field>
            </Row>
          </Stack>
          <SideTools>
            <Tool label="Quota" name="quota" keyAt={0} />
            <Tool label="Riemp" name="riemp" keyAt={0} />
            <Tool label="Manov" name="manov" keyAt={4} />
          </SideTools>
        </Block>
        <Strip />
        <Stack>
          <ColorRow label="Color. interna:" w={93} />
          <ColorRow label="Color. esterna:" w={95} />
          <ColorRow label="Color. int. ante:" w={100} />
          <ColorRow label="Color. est. ante:" w={102} />
        </Stack>
        <Strip />
        <Stack>
          <Row>
            <Label $w={100}>Prefisso profili:</Label>
            <Field>01</Field>
            <Label $w={73} $ml={1}>Opzionale:</Label>
            <Field $w={16} />
          </Row>
          <Row>
            <Label $w={101}>Prezzo vendita:</Label>
            <KeyField>L</KeyField>
            <Field $w={113}>auto</Field>
            <Spacer />
            <Label $w={77} $bare>% rappr.:</Label>
          </Row>
          <Row>
            <Label $w={142}>Prezzo per superficie:</Label>
            <Field $w={105}>auto</Field>
            <Label $w={60} $ml={799} $bare>Min.:</Label>
          </Row>
          <Row $h={62}>
            <Label $w={37} $tall>Note:</Label>
            <Field />
          </Row>
        </Stack>
        <Toolbar>
          <Tool label="Progettazio" name="progettazione" keyAt={0} w={68} h={52} iw={62} ih={36} />
          <Tool label="Allegati" name="allegati" w={68} h={52} iw={62} ih={36} />
          <Tool label="Dati" name="dati" keyAt={0} />
          <Tool label="Materi" name="materi" keyAt={0} />
          <Tool label="Calcoli" name="calcoli" keyAt={0} />
          <Tool label="Opzio" name="opzio" keyAt={0} />
          <Tool label="Rifili" name="rifili" />
          <Tool label="Fasi co" name="fasi" dark />
          <Tool label="Col. sp" name="colsp" />
          <Tool label="Energi" name="energi" />
          <Spacer />
          <IconButton $s={26}><TableGlyph /></IconButton>
          <TextButton $w={63}>Registra</TextButton>
          <TextButton $w={60}>Annulla</TextButton>
        </Toolbar>
      </WindowBody>
    </Window>

    <Window $x={268} $y={300} $w={749}>
      <TitleBar $ls={-0.25} $pad="0 7px 2px 5px">
        Quantità per fase tipologia 01
        <TitleButton>▪</TitleButton>
      </TitleBar>
      <WindowBody $row $h={310} $bg="#aaa8aa" $pad="5px 7px">
        <ListBox>
          <ListItems>
            <ListItem>
              <ListSwatch $c={OPERATOR_1} />
              <ListText>2 × Operatore 1</ListText>
            </ListItem>
            <ListItem>
              <ListSwatch $c={OPERATOR_2} />
              <ListText>3 × Operatore 2</ListText>
            </ListItem>
          </ListItems>
          <ScrollBar>
            <ScrollArrow $h={28} />
            <ScrollTrack>
              <ScrollThumb />
            </ScrollTrack>
            <ScrollArrow $h={27} $down />
          </ScrollBar>
        </ListBox>
        <DialogTools>
          <IconButton $s={29}><RoundGlyph color="green" sym="plus" /></IconButton>
          <IconButton $s={29}><RoundGlyph color="red" sym="minus" /></IconButton>
          <IconButton $s={29}><RoundGlyph color="blue" sym="ne" /></IconButton>
          <IconButton $s={29}><RoundGlyph color="gold" sym="eq" /></IconButton>
          <IconButton $s={29}>
            <svg width="24" height="24" viewBox="0 0 24 24">
              <path d="M10 4h4l2 2h6v12H10z" fill="#e0d4a8" stroke="#807040" strokeWidth="0.800" />
              <Ball cx={9} cy={14} r={8} color="green" sym="plus" />
            </svg>
          </IconButton>
          <IconButton $s={29}><TableGlyph /></IconButton>
          <IconButton $s={29} $h={26}>OK</IconButton>
        </DialogTools>
        <Panel>
          <PanelRow $h={50}>
            <PanelLabel $w={52}>Nome:</PanelLabel>
            <DropDown $before={0} $after={-1} />
            <PanelField $swatch>
              <PanelSwatch />
              <PanelValue>Operatore 2</PanelValue>
            </PanelField>
          </PanelRow>
          <PanelRow $h={50}>
            <PanelLabel $w={41}>Desc:</PanelLabel>
            <PanelField />
          </PanelRow>
          <PanelRow $h={23}>
            <PanelLabel $w={112}>Numero pezzi:</PanelLabel>
            <PanelField $w={46}>3</PanelField>
          </PanelRow>
        </Panel>
      </WindowBody>
    </Window>
  </Root>
);

export default App;
